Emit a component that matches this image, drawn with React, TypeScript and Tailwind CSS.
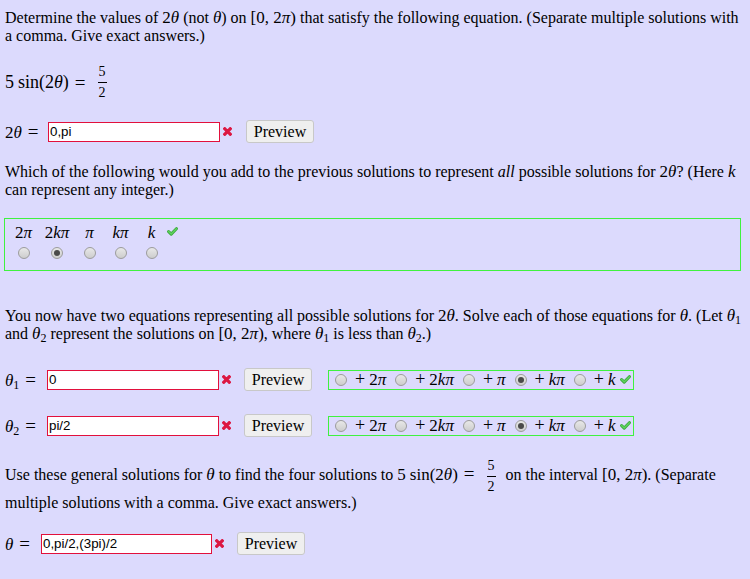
import React from "react";

function V({ children }: { children: React.ReactNode }) {
  return <i className="italic">{children}</i>;
}

function M({ children }: { children: React.ReactNode }) {
  return <span className="text-[17px] leading-none">{children}</span>;
}

function Theta({ sub }: { sub?: string }) {
  return (
    <>
      <V>θ</V>
      {sub && <sub className="text-[12px]">{sub}</sub>}
    </>
  );
}

function Frac({ n, d }: { n: string; d: string }) {
  return (
    <span className="mx-[6px] inline-flex flex-col items-center align-middle text-[14px] leading-[14px]">
      <span className="px-[1px] pb-[3px]">{n}</span>
      <span className="h-px w-full bg-black" />
      <span className="pt-[3px]">{d}</span>
    </span>
  );
}

function SinEq() {
  return (
    <>
      5<span className="ml-[4px]">sin</span>(2<V>θ</V>)<span className="mx-[6px] text-[19px] leading-none">=</span>
    </>
  );
}

function Eq() {
  return <span className="ml-[6px] text-[19px] leading-none">=</span>;
}

function Cross() {
  return (
    <svg width="9" height="9" viewBox="0 0 9 9" className="ml-[3px] shrink-0">
      <path d="M1.8 1.8 L7.2 7.2 M7.2 1.8 L1.8 7.2" stroke="#dc1742" strokeWidth="3.2" strokeLinecap="square" />
    </svg>
  );
}

function Check() {
  return (
    <svg width="11" height="9" viewBox="0 0 11 9" className="shrink-0">
      <path d="M1.6 4.6 L4.2 7.1 L9.4 1.7" fill="none" stroke="#3aa83a" strokeWidth="3" strokeLinecap="round" strokeLinejoin="round" />
      <path d="M1.6 4.6 L4.2 7.1 L9.4 1.7" fill="none" stroke="#5fd45f" strokeWidth="1.4" strokeLinecap="round" strokeLinejoin="round" />
    </svg>
  );
}

function Radio({ checked }: { checked?: boolean }) {
  return (
    <span className="flex h-[12px] w-[12px] shrink-0 items-center justify-center rounded-full border border-[#9c9c9c] bg-linear-to-b from-[#e8e8e8] to-[#cdcdcd]">
      {checked && <span className="h-[6px] w-[6px] rounded-full bg-[#4a4a4a]" />}
    </span>
  );
}

function Preview({ ml }: { ml: string }) {
  return (
    <button className={`${ml} h-[23px] w-[68px] shrink-0 rounded-[3px] border border-[#c8c8c8] bg-[#efefef] text-[16px] leading-none text-black`}>
      Preview
    </button>
  );
}

function Answer({ value, width }: { value: string; width: string }) {
  return (
    <input
      readOnly
      defaultValue={value}
      className={`${width} h-[20px] shrink-0 border border-[#e2103c] bg-white px-[1px] font-['Liberation_Sans',sans-serif] text-[13.33px] text-black outline-none`}
    />
  );
}

const bigChoices = [
  { label: <>2<V>π</V></>, w: "w-[33px]" },
  { label: <>2<V>kπ</V></>, w: "w-[34px]" },
  { label: <V>π</V>, w: "w-[31px]" },
  { label: <V>kπ</V>, w: "w-[31px]" },
  { label: <V>k</V>, w: "w-[31px]" },
];

const plusChoices = [
  <>2<V>π</V></>,
  <>2<V>kπ</V></>,
  <V>π</V>,
  <V>kπ</V>,
  <V>k</V>,
];

function PlusGroup() {
  return (
    <div className="ml-[16px] flex h-[20px] w-[306px] shrink-0 items-center border border-[#3ff23f] pl-[6px]">
      {plusChoices.map((c, i) => (
        <span key={i} className="flex items-center">
          <Radio checked={i === 3} />
          <span className={`ml-[8px] ${i === 4 ? "mr-[4px]" : "mr-[9px]"} text-[17px] leading-[18px]`}>
            <span className="mr-[4px] text-[18px]">+</span>
            {c}
          </span>
        </span>
      ))}
      <Check />
    </div>
  );
}

export default function App() {
  return (
    <main className="min-h-screen bg-[#dcdafd] px-[5px] pt-[9px] pb-[20px] font-['Liberation_Serif',serif] text-[16px] leading-[18px] text-black">
      <p className="whitespace-nowrap">
        Determine the values of <M>2<V>θ</V></M> (not <M><V>θ</V></M>) on <M>[0, 2<V>π</V>)</M> that satisfy the following equation. (Separate multiple solutions with
        <br />a comma. Give exact answers.)
      </p>

      <div className="mt-[19px] flex h-[36px] items-center text-[18px]">
        <SinEq />
        <Frac n="5" d="2" />
      </div>

      <div className="mt-[20px] flex h-[23px] items-center">
        <span className="w-[43px] shrink-0 text-[17px]">
          2<V>θ</V>
          <Eq />
        </span>
        <Answer value="0,pi" width="w-[172px]" />
        <Cross />
        <Preview ml="ml-[14px]" />
      </div>

      <p className="mt-[20px] whitespace-nowrap">
        Which of the following would you add to the previous solutions to represent <i>all</i> possible solutions for <M>2<V>θ</V></M>? (Here <M><V>k</V></M>
        <br />can represent any integer.)
      </p>

      <div className="-ml-px mt-[19px] flex w-[737px] border border-[#3ff23f] pl-[2px] pt-[5px] pb-[11px]">
        {bigChoices.map((c, i) => (
          <div key={i} className={`${c.w} flex flex-col items-center`}>
            <span className="h-[18px] text-[17px] leading-[18px]">{c.label}</span>
            <span className="mt-[5px] flex">
              <Radio checked={i === 1} />
            </span>
          </div>
        ))}
        <span className="mt-[3px] flex self-start">
          <Check />
        </span>
      </div>

      <p className="mt-[36px] whitespace-nowrap">
        You now have two equations representing all possible solutions for <M>2<V>θ</V></M>. Solve each of those equations for <M><V>θ</V></M>. (Let <M><Theta sub="1" /></M>
        <br />
        and <M><Theta sub="2" /></M> represent the solutions on <M>[0, 2<V>π</V>)</M>, where <M><Theta sub="1" /></M> is less than <M><Theta sub="2" /></M>.)
      </p>

      <div className="mt-[25px] flex h-[23px] items-center">
        <span className="w-[42px] shrink-0 text-[17px]">
          <Theta sub="1" />
          <Eq />
        </span>
        <Answer value="0" width="w-[172px]" />
        <Cross />
        <Preview ml="ml-[13px]" />
        <PlusGroup />
      </div>

      <div className="mt-[23px] flex h-[23px] items-center">
        <span className="w-[42px] shrink-0 text-[17px]">
          <Theta sub="2" />
          <Eq />
        </span>
        <Answer value="pi/2" width="w-[172px]" />
        <Cross />
        <Preview ml="ml-[13px]" />
        <PlusGroup />
      </div>

      <p className="mt-[22px] whitespace-nowrap">
        Use these general solutions for <M><V>θ</V></M> to find the four solutions to{" "}
        <M>
          <SinEq />
        </M>
        <Frac n="5" d="2" /> on the interval <M>[0, 2<V>π</V>)</M>. (Separate
        <br />
        multiple solutions with a comma. Give exact answers.)
      </p>

      <div className="mt-[20px] flex h-[23px] items-center">
        <span className="w-[36px] shrink-0 text-[17px]">
          <V>θ</V>
          <Eq />
        </span>
        <Answer value="0,pi/2,(3pi)/2" width="w-[171px]" />
        <Cross />
        <Preview ml="ml-[13px]" />
      </div>
    </main>
  );
}
